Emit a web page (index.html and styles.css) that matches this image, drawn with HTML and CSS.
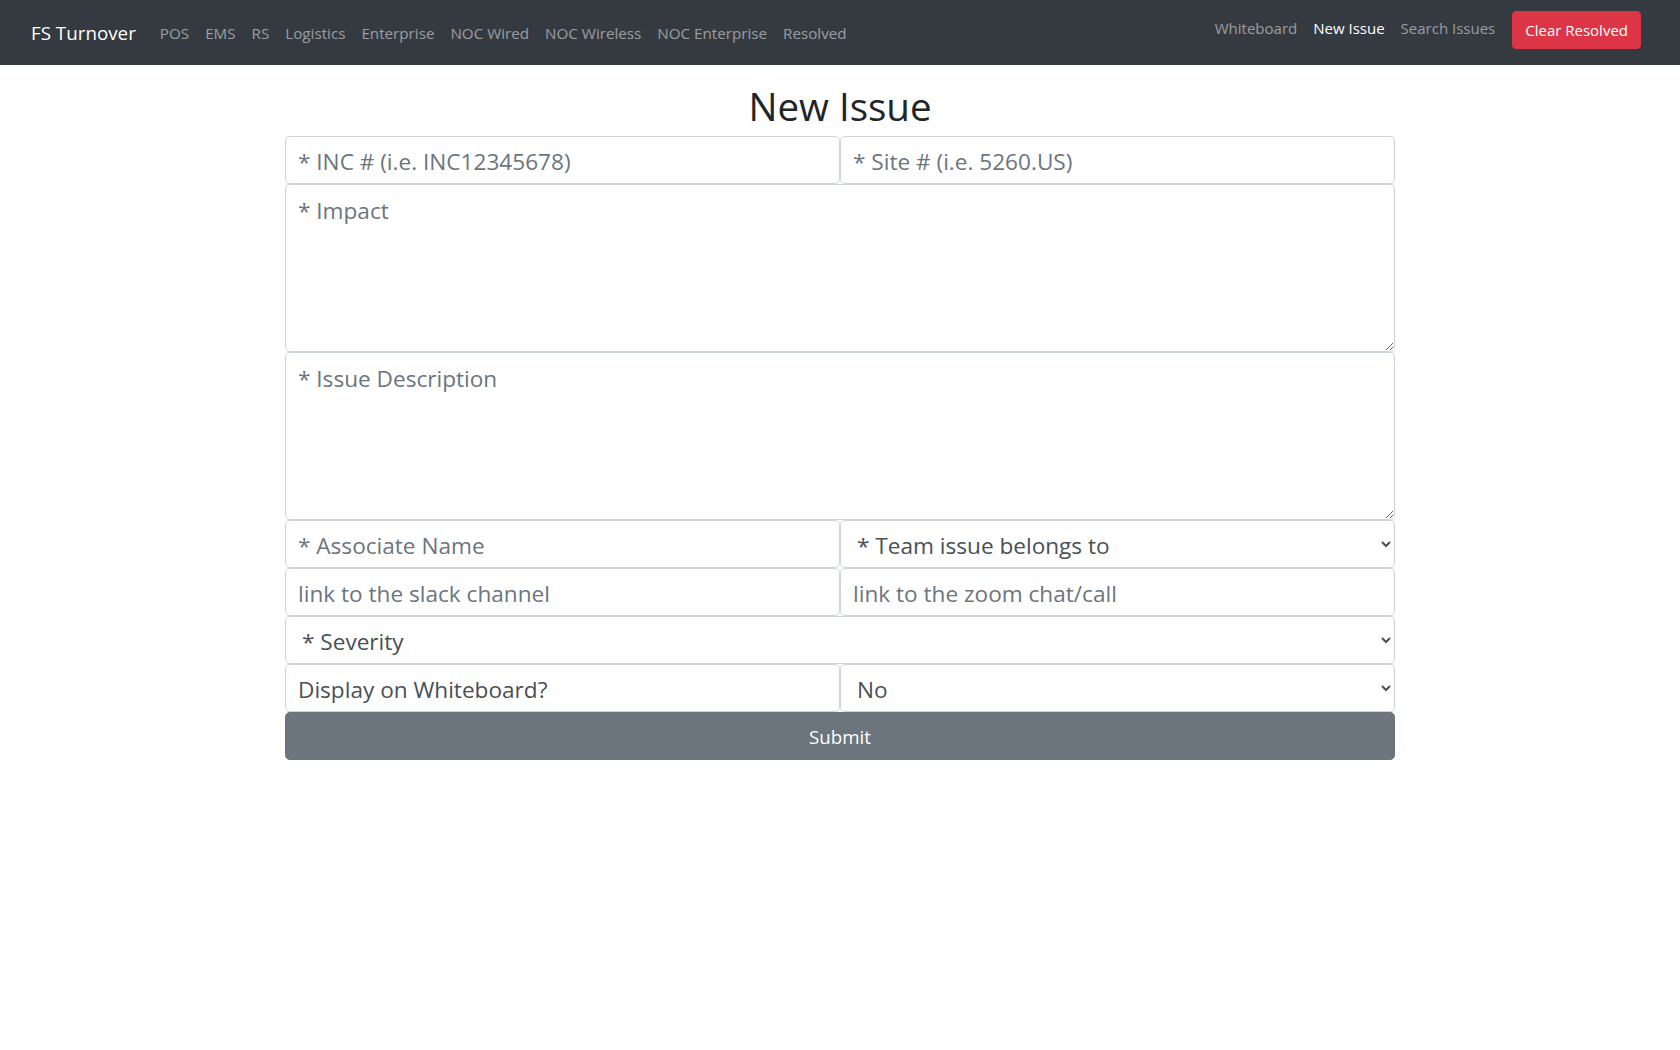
FILE: index.html
```html
<!DOCTYPE html>
<html lang="en">
<head>
<meta charset="utf-8">
<title>New Issue - FS Turnover</title>
<link rel="stylesheet" href="styles.css">
</head>
<body>
<nav class="navbar">
  <a class="brand" href="#">FS Turnover</a>
  <ul class="nav nav-left">
    <li><a class="nav-link" href="#">POS</a></li>
    <li><a class="nav-link" href="#">EMS</a></li>
    <li><a class="nav-link" href="#">RS</a></li>
    <li><a class="nav-link" href="#">Logistics</a></li>
    <li><a class="nav-link" href="#">Enterprise</a></li>
    <li><a class="nav-link" href="#">NOC Wired</a></li>
    <li><a class="nav-link" href="#">NOC Wireless</a></li>
    <li><a class="nav-link" href="#">NOC Enterprise</a></li>
    <li><a class="nav-link" href="#">Resolved</a></li>
  </ul>
  <ul class="nav nav-right">
    <li><a class="nav-link" href="#">Whiteboard</a></li>
    <li><a class="nav-link active" href="#">New Issue</a></li>
    <li><a class="nav-link" href="#">Search Issues</a></li>
    <li><button class="btn-danger" type="button">Clear Resolved</button></li>
  </ul>
</nav>
<main class="container">
  <h1 class="title">New Issue</h1>
  <form class="issue-form">
    <div class="row">
      <input class="field" type="text" placeholder="* INC # (i.e. INC12345678)">
      <input class="field" type="text" placeholder="* Site # (i.e. 5260.US)">
    </div>
    <textarea class="field area" rows="5" placeholder="* Impact"></textarea>
    <textarea class="field area" rows="5" placeholder="* Issue Description"></textarea>
    <div class="row">
      <input class="field" type="text" placeholder="* Associate Name">
      <select class="field select">
        <option>* Team issue belongs to</option>
      </select>
    </div>
    <div class="row">
      <input class="field" type="text" placeholder="link to the slack channel">
      <input class="field" type="text" placeholder="link to the zoom chat/call">
    </div>
    <select class="field select">
      <option>* Severity</option>
    </select>
    <div class="row">
      <input class="field value" type="text" value="Display on Whiteboard?" readonly>
      <select class="field select">
        <option>No</option>
      </select>
    </div>
    <button class="btn-submit" type="button">Submit</button>
  </form>
</main>
</body>
</html>
```
FILE: styles.css
```css
* { box-sizing: border-box; }
html, body { margin: 0; padding: 0; }
body {
  font-family: "Open Sans", "Noto Sans", sans-serif;
  font-size: 15px;
  line-height: 1.5;
  color: #212529;
  background: #fff;
}
a { text-decoration: none; }

.navbar {
  display: flex;
  align-items: center;
  height: 65px;
  padding: 0 31px;
  background: #343a40;
}
.brand {
  font-size: 18.8px;
  line-height: 30px;
  color: #fff;
  margin-right: 16px;
}
.nav {
  display: flex;
  list-style: none;
  margin: 0;
  padding: 0;
}
.nav-link {
  display: block;
  padding: 0 8px;
  font-size: 15.2px;
  line-height: 24px;
  color: rgba(255, 255, 255, 0.5);
}
.nav-link.active { color: #fff; }
.nav-left { margin-top: 0; }
.nav-right {
  margin-left: auto;
  align-items: center;
  margin-top: -5px;
  margin-right: 8px;
}
.nav-right .nav-link { margin-top: -5px; font-size: 15px; }
.btn-danger {
  margin-left: 9px;
  font-family: inherit;
  font-size: 15px;
  line-height: 24px;
  padding: 6px 12px;
  color: #fff;
  background: #dc3545;
  border: 1px solid #dc3545;
  border-radius: 4px;
}

.container {
  width: 1110px;
  margin: 0 auto;
}
.title {
  margin: 17px 0 6px;
  font-size: 38.5px;
  font-weight: 500;
  line-height: 48px;
  text-align: center;
  color: #212529;
}
.issue-form { display: flex; flex-direction: column; }
.row { display: flex; }
.row .field { flex: 1 1 0; min-width: 0; }
.field {
  display: block;
  width: 100%;
  height: 48px;
  margin: 0;
  padding: 9px 12px 7px;
  font-family: inherit;
  font-size: 22.6px;
  line-height: 30px;
  color: #495057;
  background: #fff;
  border: 1px solid #ced4da;
  border-radius: 4.8px;
  outline: none;
}
.field::placeholder { color: #6c757d; opacity: 1; }
.area { height: 168px; padding: 8px 12px; line-height: 36px; resize: vertical; }
.select { padding: 8px 12px; }
.btn-submit {
  height: 48px;
  margin: 0;
  padding: 9px 16px 7px;
  font-family: inherit;
  font-size: 18.7px;
  line-height: 30px;
  color: #fff;
  background: #6c757d;
  border: 1px solid #6c757d;
  border-radius: 4.8px;
}
```
